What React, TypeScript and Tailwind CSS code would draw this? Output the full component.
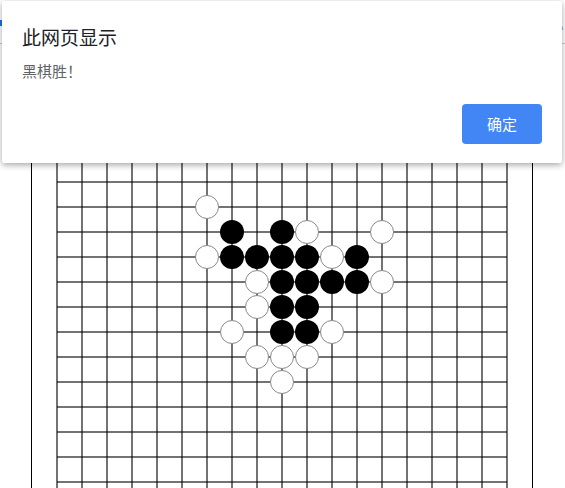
import React from 'react';

const whiteStones: [number, number][] = [
    [6, 1], [10, 2], [13, 2], [6, 3], [11, 3], [8, 4], [13, 4],
    [8, 5], [7, 6], [11, 6], [8, 7], [9, 7], [10, 7], [9, 8]
];

const blackStones: [number, number][] = [
    [7, 2], [9, 2], [7, 3], [8, 3], [9, 3], [10, 3], [12, 3],
    [9, 4], [10, 4], [11, 4], [12, 4], [9, 5], [10, 5], [9, 6], [10, 6]
];

const Board: React.FC = () => {
    const lines = Array.from({ length: 19 }, (_, k) => 25 + k * 25);
    return (
        <svg width={500} height={500} viewBox="0 0 500 500" className="block">
            {lines.map((p) => (
                <line key={'v' + p} x1={p} y1={25} x2={p} y2={475} stroke="rgba(0,0,0,0.55)" strokeWidth={2} />
            ))}
            {lines.map((p) => (
                <line key={'h' + p} x1={25} y1={p} x2={475} y2={p} stroke="rgba(0,0,0,0.55)" strokeWidth={2} />
            ))}
            {blackStones.map(([i, j]) => (
                <circle key={'b' + i + '-' + j} cx={25 + i * 25} cy={50 + j * 25} r={12} fill="#000" />
            ))}
            {whiteStones.map(([i, j]) => (
                <circle key={'w' + i + '-' + j} cx={25 + i * 25} cy={50 + j * 25} r={11.5} fill="#fff" stroke="#888" strokeWidth={1} />
            ))}
        </svg>
    );
};

const App: React.FC = () => {
    return (
        <div
            className="relative h-[488px] w-[565px] overflow-hidden bg-white"
            style={{ fontFamily: '"Noto Sans CJK SC", "Noto Sans", sans-serif' }}
        >
            {/* page behind the alert */}
            <div className="relative h-[44px] border-b border-[#ccc]">
                <div className="absolute left-0 top-[20px] h-[6px] w-[2px] bg-[#1a73e8]" />
                <div className="absolute right-[2px] top-[20px] text-[9px] leading-none text-[#333]">\</div>
            </div>
            <div className="mt-[87px] pl-[31px]">
                <div className="w-[502px] border border-black">
                    <Board />
                </div>
            </div>

            {/* alert dialog */}
            <div className="absolute left-[2px] top-[1px] flex h-[162px] w-[560px] flex-col rounded-[2px] bg-white px-[20px] pt-[23px] pb-[19px] shadow-[0_2px_6px_rgba(0,0,0,0.35)]">
                <div className="text-[19px] leading-[26px] text-[#202124]">此网页显示</div>
                <div className="mt-[11px] text-[15px] leading-[20px] text-[#5f6368]">黑棋胜！</div>
                <div className="mt-auto flex justify-end">
                    <button className="h-[40px] w-[80px] rounded-[4px] bg-[#4285f4] text-[15px] text-white">
                        确定
                    </button>
                </div>
            </div>
        </div>
    );
};

export default App;
